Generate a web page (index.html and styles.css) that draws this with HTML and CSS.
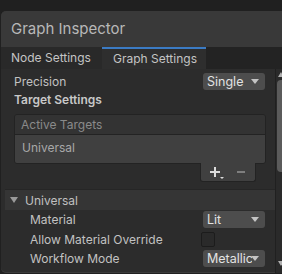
FILE: index.html
```html
<!DOCTYPE html>
<html>
<head>
<meta charset="utf-8">
<link rel="stylesheet" href="styles.css">
</head>
<body>
<div class="panel">
  <div class="header">Graph Inspector</div>
  <div class="tabs">
    <div class="tab">Node Settings</div>
    <div class="tab active">Graph Settings</div>
  </div>
  <div class="body">
    <div class="content">
      <div class="row">
        <span class="label">Precision</span>
        <div class="dropdown"><span>Single</span><span class="arrow"></span></div>
      </div>
      <div class="row section">Target Settings</div>
      <div class="list">
        <div class="list-head">Active Targets</div>
        <div class="list-body">Universal</div>
      </div>
      <div class="list-foot">
        <span class="plus"><span class="mini"></span></span>
        <span class="minus"></span>
      </div>
      <div class="foldout"><span class="fold-arrow"></span>Universal</div>
      <div class="row sub">
        <span class="label">Material</span>
        <div class="dropdown"><span>Lit</span><span class="arrow"></span></div>
      </div>
      <div class="row sub">
        <span class="label">Allow Material Override</span>
        <div class="checkbox"></div>
      </div>
      <div class="row sub">
        <span class="label">Workflow Mode</span>
        <div class="dropdown"><span class="clip">Metallic</span><span class="arrow"></span></div>
      </div>
    </div>
    <div class="scrollbar">
      <span class="up"></span>
      <div class="thumb"></div>
      <span class="down"></span>
    </div>
  </div>
</div>
</body>
</html>
```

FILE: styles.css
```css
html, body {
  margin: 0;
  padding: 0;
  background: #202020;
  width: 282px;
  height: 274px;
  overflow: hidden;
  font-family: Inter, "Noto Sans", sans-serif;
  font-size: 12px;
  color: #c2c2c2;
}

.panel {
  margin: 11px 0 0 1px;
  width: 285px;
  height: 262px;
  border-radius: 5px;
  background: #2c2c2c;
  overflow: hidden;
  display: flex;
  flex-direction: column;
  box-shadow: inset 0 -1px 0 #3a3a3a;
}

.header {
  height: 36px;
  flex: none;
  background: #393939;
  color: #b8b8b8;
  font-size: 15px;
  line-height: 36px;
  padding-left: 10px;
}

.tabs {
  display: flex;
  height: 22px;
  flex: none;
  background: #232323;
}

.tab {
  width: 101px;
  background: #292929;
  color: #c4c4c4;
  line-height: 22px;
  padding-left: 10px;
  box-sizing: border-box;
}

.tab.active {
  width: 104px;
  background: #2e2e2e;
  border-top: 2px solid #3b7bc4;
  line-height: 20px;
  padding-left: 11px;
}

.body {
  flex: 1;
  display: flex;
  min-height: 0;
}

.content {
  width: 274px;
  flex: none;
  padding-top: 4px;
  display: flex;
  flex-direction: column;
}

.row {
  display: flex;
  align-items: center;
  justify-content: space-between;
  height: 17px;
  padding-left: 13px;
  padding-right: 10px;
}

.section {
  height: 18px;
  font-weight: 600;
  color: #c8c8c8;
}

.dropdown {
  width: 62px;
  height: 17px;
  box-sizing: border-box;
  background: #4d4d4d;
  border-radius: 3px;
  color: #e2e2e2;
  font-size: 12.5px;
  display: flex;
  align-items: center;
  justify-content: space-between;
  padding: 0 6px 0 4px;
  overflow: hidden;
}

.clip {
  width: 45px;
  overflow: hidden;
  white-space: nowrap;
  text-overflow: clip;
  flex: none;
  margin-right: -2px;
}

.arrow {
  width: 0;
  height: 0;
  border-left: 4px solid transparent;
  border-right: 4px solid transparent;
  border-top: 5px solid #c4c4c4;
  flex: none;
}

.list {
  margin: 6px 9px 0 13px;
  border: 1px solid #232323;
  border-radius: 3px;
  overflow: hidden;
}

.list-head {
  height: 19px;
  background: #333333;
  border-bottom: 1px solid #232323;
  color: #8a8a8a;
  line-height: 19px;
  padding-left: 6px;
}

.list-body {
  height: 28px;
  background: #404040;
  color: #a8a8a8;
  line-height: 25px;
  padding-left: 7px;
}

.list-foot {
  align-self: flex-end;
  margin-right: 19px;
  margin-top: -1px;
  width: 56px;
  height: 19px;
  background: #404040;
  border: 1px solid #232323;
  border-top: none;
  border-radius: 0 0 3px 3px;
  box-sizing: border-box;
  display: flex;
  align-items: center;
  padding-left: 9px;
  gap: 9px;
}

.plus {
  position: relative;
  width: 10px;
  height: 10px;
  flex: none;
  background:
    linear-gradient(#dcdcdc, #dcdcdc) center / 10px 2px no-repeat,
    linear-gradient(#dcdcdc, #dcdcdc) center / 2px 10px no-repeat;
}

.mini {
  position: absolute;
  right: -4px;
  bottom: -2px;
  width: 0;
  height: 0;
  border-left: 2px solid transparent;
  border-right: 2px solid transparent;
  border-top: 2px solid #dcdcdc;
}

.minus {
  width: 8px;
  height: 2px;
  flex: none;
  margin-left: 8px;
  background: #7e7e7e;
}

.foldout {
  margin: 7px 0 0 4px;
  height: 21px;
  background: #353535;
  border-top: 1px solid #262626;
  box-sizing: border-box;
  display: flex;
  align-items: center;
  color: #c0c0c0;
  padding-left: 5px;
}

.fold-arrow {
  width: 0;
  height: 0;
  border-left: 4px solid transparent;
  border-right: 4px solid transparent;
  border-top: 6px solid #9a9a9a;
  margin-right: 7px;
}

.row.sub {
  height: 19.5px;
  padding-left: 29px;
}

.checkbox {
  width: 12px;
  height: 13px;
  border: 1px solid #1c1c1c;
  background: #2a2a2a;
  border-radius: 2px;
  margin-right: 50px;
}

.scrollbar {
  width: 8px;
  flex: none;
  background: #2a2a2a;
  border-left: 1px solid #202020;
  position: relative;
}

.up, .down {
  position: absolute;
  left: 2px;
  width: 0;
  height: 0;
  border-left: 3px solid transparent;
  border-right: 3px solid transparent;
}

.up {
  top: 3px;
  border-bottom: 5px solid #b0b0b0;
}

.down {
  bottom: 7px;
  border-top: 5px solid #b0b0b0;
}

.thumb {
  position: absolute;
  left: 1px;
  top: 11px;
  width: 8px;
  height: 92px;
  background: #5b5b5b;
  border-radius: 4px;
}
```
